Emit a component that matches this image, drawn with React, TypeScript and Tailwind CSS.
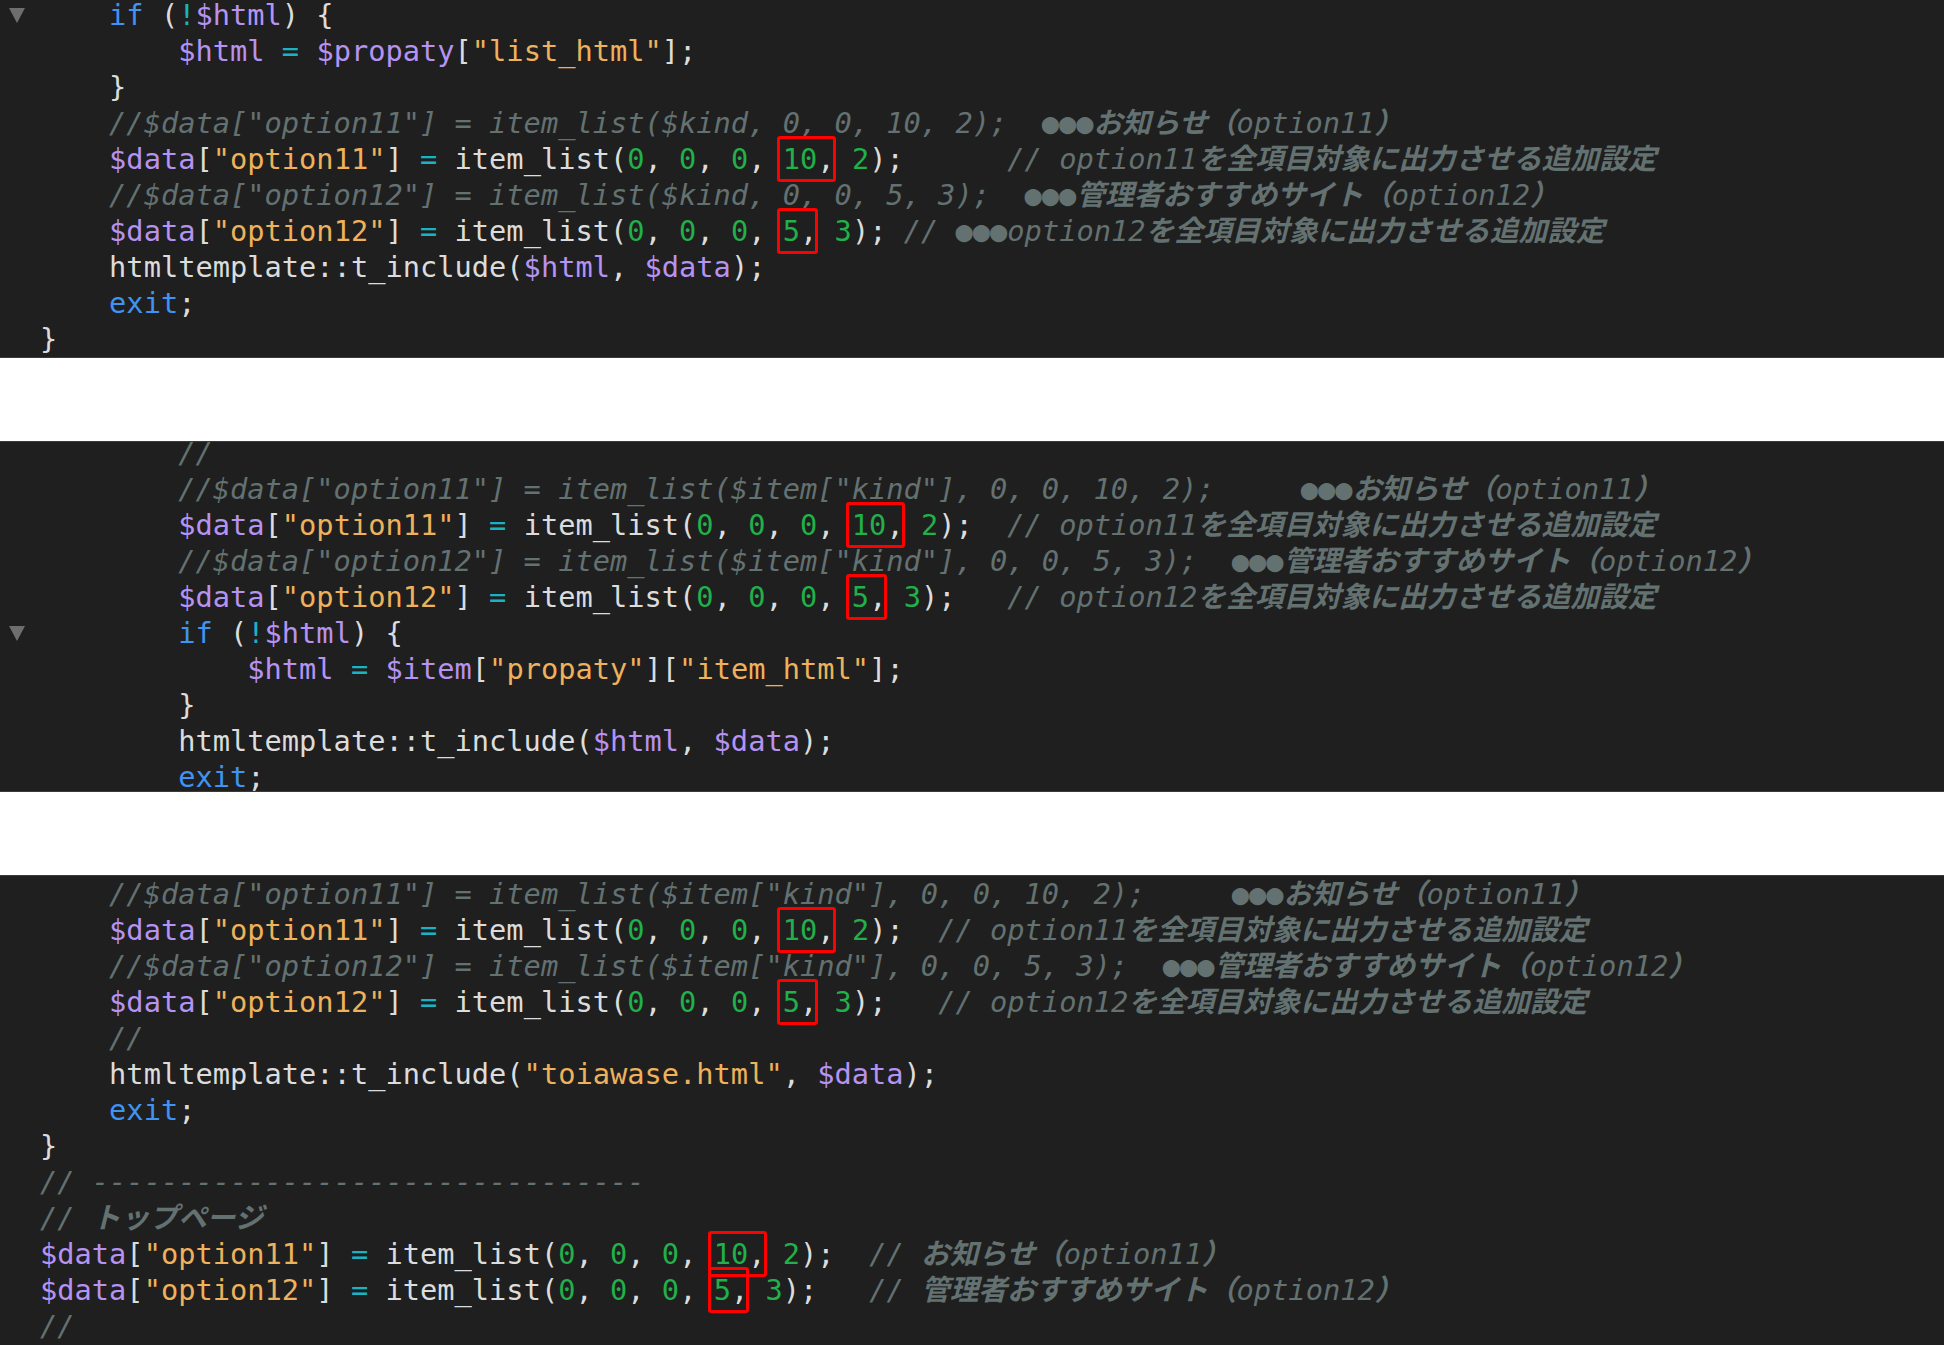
import type { ReactNode } from "react";

type Line = { t: string; fold?: boolean };

const panel1: Line[] = [
  { t: "    if (!$html) {", fold: true },
  { t: '        $html = $propaty["list_html"];' },
  { t: "    }" },
  { t: '    //$data["option11"] = item_list($kind, 0, 0, 10, 2);  ●●●お知らせ（option11）' },
  { t: '    $data["option11"] = item_list(0, 0, 0, ⟦10,⟧ 2);      // option11を全項目対象に出力させる追加設定' },
  { t: '    //$data["option12"] = item_list($kind, 0, 0, 5, 3);  ●●●管理者おすすめサイト（option12）' },
  { t: '    $data["option12"] = item_list(0, 0, 0, ⟦5,⟧ 3); // ●●●option12を全項目対象に出力させる追加設定' },
  { t: "    htmltemplate::t_include($html, $data);" },
  { t: "    exit;" },
  { t: "}" },
];

const panel2: Line[] = [
  { t: "        //" },
  { t: '        //$data["option11"] = item_list($item["kind"], 0, 0, 10, 2);     ●●●お知らせ（option11）' },
  { t: '        $data["option11"] = item_list(0, 0, 0, ⟦10,⟧ 2);  // option11を全項目対象に出力させる追加設定' },
  { t: '        //$data["option12"] = item_list($item["kind"], 0, 0, 5, 3);  ●●●管理者おすすめサイト（option12）' },
  { t: '        $data["option12"] = item_list(0, 0, 0, ⟦5,⟧ 3);   // option12を全項目対象に出力させる追加設定' },
  { t: "        if (!$html) {", fold: true },
  { t: '            $html = $item["propaty"]["item_html"];' },
  { t: "        }" },
  { t: "        htmltemplate::t_include($html, $data);" },
  { t: "        exit;" },
];

const panel3: Line[] = [
  { t: '    //$data["option11"] = item_list($item["kind"], 0, 0, 10, 2);     ●●●お知らせ（option11）' },
  { t: '    $data["option11"] = item_list(0, 0, 0, ⟦10,⟧ 2);  // option11を全項目対象に出力させる追加設定' },
  { t: '    //$data["option12"] = item_list($item["kind"], 0, 0, 5, 3);  ●●●管理者おすすめサイト（option12）' },
  { t: '    $data["option12"] = item_list(0, 0, 0, ⟦5,⟧ 3);   // option12を全項目対象に出力させる追加設定' },
  { t: "    //" },
  { t: '    htmltemplate::t_include("toiawase.html", $data);' },
  { t: "    exit;" },
  { t: "}" },
  { t: "// --------------------------------" },
  { t: "// トップページ" },
  { t: '$data["option11"] = item_list(0, 0, 0, ⟦10,⟧ 2);  // お知らせ（option11）' },
  { t: '$data["option12"] = item_list(0, 0, 0, ⟦5,⟧ 3);   // 管理者おすすめサイト（option12）' },
  { t: "//" },
];

const CJK = /([\u3000-\u30ff\u4e00-\u9fff\uff00-\uffef]+)/;
const TOKEN = /(\/\/.*$)|("[^"]*")|(\$\w+)|(\b\d+\b)|(\b(?:if|exit)\b)|([=!])/g;

function Comment({ text }: { text: string }) {
  const parts = text.split(CJK);
  return (
    <span className="italic text-[#637171]">
      {parts.map((p, i) =>
        i % 2 === 1 ? (
          <span key={i} className="font-bold">
            {p}
          </span>
        ) : (
          p
        )
      )}
    </span>
  );
}

function Code({ text }: { text: string }) {
  const out: ReactNode[] = [];
  let last = 0;
  for (const m of text.matchAll(TOKEN)) {
    const i = m.index ?? 0;
    if (i > last) out.push(text.slice(last, i));
    const k = out.length;
    if (m[1]) out.push(<Comment key={k} text={m[1]} />);
    else if (m[2]) out.push(<span key={k} className="text-[#eeb15c]">{m[2]}</span>);
    else if (m[3]) out.push(<span key={k} className="text-[#b693f0]">{m[3]}</span>);
    else if (m[4]) out.push(<span key={k} className="text-[#21b04a]">{m[4]}</span>);
    else if (m[5]) out.push(<span key={k} className="text-[#3f93f2]">{m[5]}</span>);
    else if (m[6]) out.push(<span key={k} className="text-[#19b3c4]">{m[6]}</span>);
    last = i + m[0].length;
  }
  if (last < text.length) out.push(text.slice(last));
  return <>{out}</>;
}

function CodeLine({ line }: { line: Line }) {
  const parts = line.t.split(/(⟦[^⟧]*⟧)/);
  return (
    <div className="flex h-[36px] items-center">
      <div className="flex w-[40px] shrink-0 items-center">
        {line.fold && (
          <svg width="16" height="15" viewBox="0 0 16 15" className="ml-[9px]">
            <path d="M0 0 L16 0 L8 15 Z" fill="#6e6e6e" />
          </svg>
        )}
      </div>
      <span className="whitespace-pre leading-[36px]">
        {parts.map((p, i) =>
          p.startsWith("⟦") ? (
            <span key={i} className="relative inline-block h-[36px] leading-[36px]">
              <Code text={p.slice(1, -1)} />
              <span className="pointer-events-none absolute -left-[6px] -right-[1px] -top-[5px] -bottom-[5px] rounded-[3px] border-[3px] border-[#ff0000]" />
            </span>
          ) : (
            <Code key={i} text={p} />
          )
        )}
      </span>
    </div>
  );
}

function Panel({ lines, className }: { lines: Line[]; className: string }) {
  return (
    <div className={`overflow-hidden border-[#3a3a3a] bg-[#1f1f1f] ${className}`}>
      {lines.map((l, i) => (
        <CodeLine key={i} line={l} />
      ))}
    </div>
  );
}

export default function App() {
  return (
    <div
      className="flex h-[1345px] w-[1944px] flex-col overflow-hidden bg-white text-[28.7px] text-[#dcdcdc]"
      style={{ fontFamily: '"DejaVu Sans Mono", "Noto Sans CJK JP", monospace' }}
    >
      <Panel lines={panel1} className="h-[358px] shrink-0 border-b pt-0 [&>div:first-child]:-mt-[3px]" />
      <div className="h-[83px] shrink-0 bg-white" />
      <Panel lines={panel2} className="h-[351px] shrink-0 border-y [&>div:first-child]:-mt-[7px]" />
      <div className="h-[83px] shrink-0 bg-white" />
      <Panel lines={panel3} className="h-[470px] shrink-0 border-t" />
    </div>
  );
}
